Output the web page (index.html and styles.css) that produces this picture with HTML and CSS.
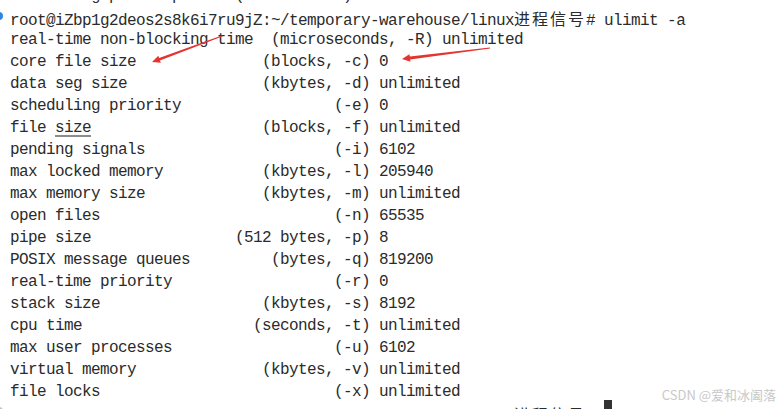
FILE: index.html
```html
<!DOCTYPE html>
<html lang="zh">
<head>
<meta charset="utf-8">
<title>ulimit -a</title>
<link rel="stylesheet" href="styles.css">
</head>
<body>
<div class="term">
  <div class="line prev">         g p      p      (           )</div>
  <div class="line cmd">root@iZbp1g2deos2s8k6i7ru9jZ:~/temporary-warehouse/linux<span class="cjk">进程信号</span># ulimit -a</div>
  <div class="line">real-time non-blocking time  (microseconds, -R) unlimited</div>
  <div class="line">core file size              (blocks, -c) 0</div>
  <div class="line">data seg size               (kbytes, -d) unlimited</div>
  <div class="line">scheduling priority                 (-e) 0</div>
  <div class="line">file <span class="link">size</span>                   (blocks, -f) unlimited</div>
  <div class="line">pending signals                     (-i) 6102</div>
  <div class="line">max locked memory           (kbytes, -l) 205940</div>
  <div class="line">max memory size             (kbytes, -m) unlimited</div>
  <div class="line">open files                          (-n) 65535</div>
  <div class="line">pipe size                (512 bytes, -p) 8</div>
  <div class="line">POSIX message queues         (bytes, -q) 819200</div>
  <div class="line">real-time priority                  (-r) 0</div>
  <div class="line">stack size                  (kbytes, -s) 8192</div>
  <div class="line">cpu time                   (seconds, -t) unlimited</div>
  <div class="line">max user processes                  (-u) 6102</div>
  <div class="line">virtual memory              (kbytes, -v) unlimited</div>
  <div class="line">file locks                          (-x) unlimited</div>
  <div class="line cmd last">root@iZbp1g2deos2s8k6i7ru9jZ:~/temporary-warehouse/linux<span class="cjk">进程信号</span># <span class="cursor"></span></div>

  <svg class="arrows" width="784" height="409" viewBox="0 0 784 409" xmlns="http://www.w3.org/2000/svg">
    <polygon fill="#e5332f" points="222.2,36.5 221.8,35.5 159.1,57.9 158.3,55.7 152,62 160.9,62.7 159.9,60.5"/>
    <polygon fill="#e5332f" points="490.1,48.5 489.9,47.5 409.8,56.6 409.4,54.3 402,59 410.5,61.7 410.1,59.4"/>
  </svg>
  <div class="watermark">CSDN @爱和冰阖落</div>
</div>
</body>
</html>
```

FILE: styles.css
```css
html, body {
  margin: 0;
  padding: 0;
  background: #ffffff;
  overflow: hidden;
}

body {
  width: 784px;
  height: 409px;
}

.term {
  position: relative;
  height: 409px;
  overflow: hidden;
}

.line {
  white-space: pre;
  font-family: "Liberation Mono", "DejaVu Sans Mono", "Noto Sans CJK SC", monospace;
  font-size: 16px;
  letter-spacing: -0.6px;
  line-height: 22px;
  height: 22px;
  color: #2b2b2b;
  padding-left: 10px;
}

.prev {
  margin-top: -15px;
}

.cmd {
  position: relative;
}

.cmd::before {
  content: "";
  position: absolute;
  left: -5px;
  top: 5px;
  width: 8px;
  height: 8px;
  border-radius: 50%;
  background: #2f86e0;
}

.cmd.last::before {
  background: #c4c4c4;
  top: 4px;
}

.cjk {
  font-family: "Noto Sans CJK SC", sans-serif;
  font-size: 16px;
  letter-spacing: 2px;
}

.link {
  text-decoration: underline;
  text-decoration-color: #8c8c8c;
  text-decoration-thickness: 2px;
  text-underline-offset: 3px;
}

.cursor {
  display: inline-block;
  width: 8px;
  height: 20px;
  background: #333333;
  vertical-align: top;
  margin-top: -3px;
}

.arrows {
  position: absolute;
  left: 0;
  top: 0;
  pointer-events: none;
}

.watermark {
  position: absolute;
  right: 8px;
  top: 386px;
  font-family: "Noto Sans CJK SC", "Noto Sans", sans-serif;
  font-size: 13px;
  line-height: 18px;
  color: #c9c9c9;
}
```
